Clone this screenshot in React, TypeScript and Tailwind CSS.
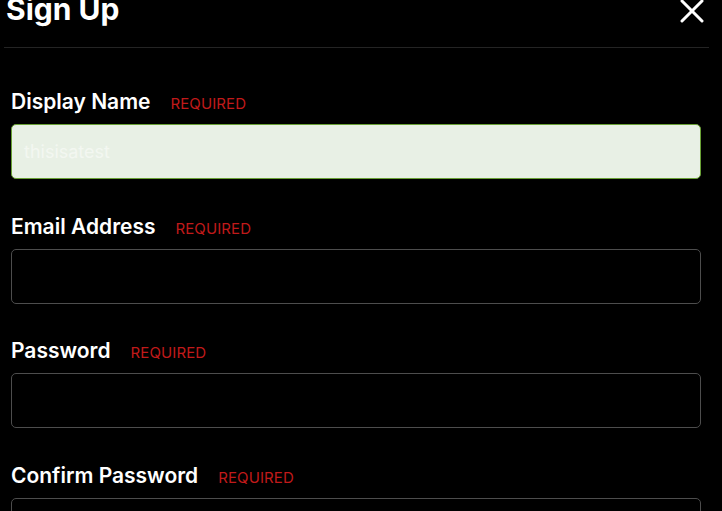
import React from "react";

interface FieldProps {
    label: string;
    value?: string;
    filled?: boolean;
}

const Field: React.FC<FieldProps> = ({ label, value, filled }: FieldProps) => {
    return (
        <div className="flex flex-col">
            <div className="flex items-baseline h-[24px]">
                <span className="text-[21px] leading-[24px] font-semibold text-white">{label}</span>
                <span className="ml-[20px] text-[15px] leading-[20px] text-[#c01a1a] tracking-[0.1px]">REQUIRED</span>
            </div>
            <div
                className={`mt-[10px] h-[55px] w-[690px] rounded-[5px] border flex items-center px-[12px] ${
                    filled ? 'bg-[#e8f0e5] border-[#69a035]' : 'bg-black border-[#4d4d4d]'
                }`}
            >
                <span className="text-[18px] text-[#f3f7f1]">{value}</span>
            </div>
        </div>
    );
};

export default function App() {
    return (
        <div className="w-[722px] h-[511px] overflow-hidden bg-black" style={{ fontFamily: 'Inter, "Noto Sans", sans-serif' }}>
            <div className="-mt-[9px] ml-[4px] w-[705px] h-[57px] border-b border-[#242424] flex justify-between">
                <h1 className="ml-[2px] text-[30px] leading-[36px] font-bold text-white">Sign Up</h1>
                <button className="mr-[5px] mt-[8px] h-[24px] w-[24px] text-white">
                    <svg viewBox="0 0 24 24" width="24" height="24" fill="none" stroke="currentColor" strokeWidth="3" strokeLinecap="round">
                        <path d="M2 2L22 22M22 2L2 22" />
                    </svg>
                </button>
            </div>
            <div className="pl-[11px] pt-[42px] flex flex-col gap-[35.5px]">
                <Field label="Display Name" value="thisisatest" filled />
                <Field label="Email Address" />
                <Field label="Password" />
                <Field label="Confirm Password" />
            </div>
        </div>
    );
}
